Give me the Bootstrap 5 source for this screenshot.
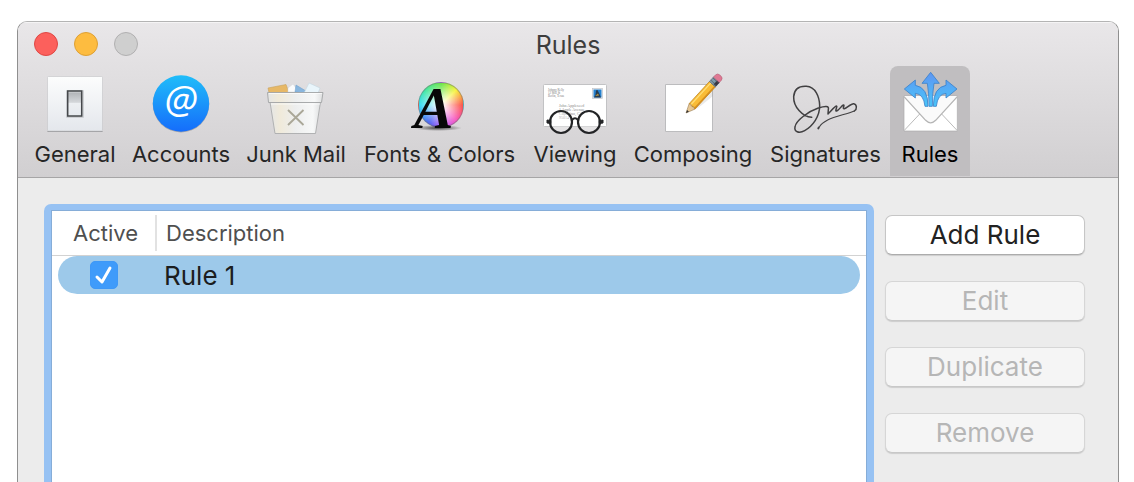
<!DOCTYPE html>
<html lang="en">
<head>
<meta charset="utf-8">
<meta name="viewport" content="width=device-width, initial-scale=1">
<title>Rules</title>
<link href="https://cdn.jsdelivr.net/npm/bootstrap@5.3.0/dist/css/bootstrap.min.css" rel="stylesheet">
<style>
body { font-family: Inter, "Liberation Sans", sans-serif; background: #fff; color: #262626; }
.page { min-height: 100vh; padding: 21px 15px 0 17px; }
.prefs { background: #ececec; border: 1px solid #8f8f8f; border-top-color: #b4b4b4; border-bottom: 0; border-radius: 10px 10px 0 0; overflow: hidden; }
.prefs-head { background: linear-gradient(#e9e7e9, #d1cfd1); border-bottom: 1px solid #a6a5a6; box-shadow: inset 0 1px #f5f4f5; padding-bottom: 1px; }
.titlebar { height: 44px; padding: 10px 16px; }
.title { font-size: 25px; line-height: 26px; color: #3d3d3d; }
.light { width: 24px; height: 24px; padding: 0; border: 1px solid; border-radius: 50%; margin-right: 16px; }
.light-close { background: #fc605c; border-color: #df4744; }
.light-min { background: #fdbc40; border-color: #dea034; }
.light-zoom { background: #cfcfcf; border-color: #b1b0b1; }
.tools { grid-template-columns: 98px 114px 116px 171px 100px 136px 129px 80px; padding: 0 8px; }
.tool { height: 110px; border-radius: 8px 8px 0 0; color: #262626; text-decoration: none; font-size: 22px; line-height: 28px; white-space: nowrap; }
.tool.active { background: #c0bec0; color: #000; }
.tool svg { width: 72px; height: 72px; margin-bottom: 2px; overflow: visible; flex: none; }
.wheel { width: 46px; height: 46px; border-radius: 50%; border: 1px solid #7778; background: radial-gradient(#fff 5%, #fff0 75%), conic-gradient(#5be33c, #f6f32c 45deg, #fc4638 90deg, #f64aba 135deg, #c04cf5 170deg, #3d58f2 215deg, #25d9f4 270deg, #32e6a0 310deg, #5be33c); }
.prefs-body { padding: 26px 33px 0 26px; gap: 11px; }
.rules-box { border: solid #97c2f3; border-width: 6px 7px 0; border-radius: 7px 7px 0 0; background: #fff; border-bottom: 0; }
.rules-inner { border: 1px solid #86add8; border-bottom: 0; height: 100%; }
.rules-table { border-collapse: separate; border-spacing: 0; }
.rules-table th { font-weight: 400; font-size: 22px; line-height: 28px; height: 45px; color: #4f4f4f; border-bottom: 1px solid #d2d2d2; padding: 0 0 0 9px; }
.rules-table .col-active { width: 105px; padding: 4px 0; height: 45px; }
.col-active span { display: block; padding-left: 21px; line-height: 36px; border-right: 2px solid #e2e2e2; }
.rules-table td { height: 38px; background: #9dc9ea; background-clip: padding-box; font-size: 26px; line-height: 36px; color: #1b1d20; padding: 2px 0 0 7px; }
.rules-table td:first-child { border-left: 6px solid transparent; border-radius: 25px 0 0 25px / 19px 0 0 19px; padding: 0 0 0 32px; }
.rules-table td:last-child { border-right: 6px solid transparent; border-radius: 0 25px 25px 0 / 0 19px 19px 0; }
.rules-table .form-check-input { width: 28px; height: 28px; margin: 0; border-radius: 5px; }
.rules-table .form-check-input:checked { border-color: #3e98f7; background: #3f9bfa url("data:image/svg+xml,%3Csvg xmlns='http://www.w3.org/2000/svg' viewBox='0 0 28 28'%3E%3Cpath d='M7 16l5 5L20 7' fill='none' stroke='white' stroke-width='3' stroke-linecap='round' stroke-linejoin='round'/%3E%3C/svg%3E") center/28px no-repeat; }
.actions { width: 200px; gap: 26px; padding-top: 11px; }
.actions .btn { height: 40px; padding: 0; font-size: 26px; line-height: 36px; background: #fff; border: 1px solid #c6c6c6; border-bottom-color: #acacac; border-radius: 7px; color: #222; box-shadow: 0 1px 1px #0002; }
.actions .btn:disabled { background: #f5f5f5; border-color: #d6d6d6; border-bottom-color: #c8c8c8; color: #b6b6b6; opacity: 1; }
</style>
</head>
<body>
<div class="page d-flex flex-column">
<main class="prefs flex-grow-1 d-flex flex-column">
<header class="prefs-head">
<div class="titlebar row g-0">
<div class="col d-flex"><button class="light light-close" aria-label="Close"></button><button class="light light-min" aria-label="Minimize"></button><button class="light light-zoom" aria-label="Zoom" disabled></button></div>
<h1 class="title col-auto mb-0 fw-normal">Rules</h1>
<div class="col"></div>
</div>
<nav class="tools d-grid" aria-label="Preferences">
<a href="#" class="tool d-flex flex-column align-items-center">
<svg viewBox="0 0 72 72"><defs><linearGradient id="plate" x2="0" y2="1"><stop stop-color="#fcfdfd"/><stop offset="1" stop-color="#e4e7ec"/></linearGradient><linearGradient id="sw" x2="0" y2="1"><stop stop-color="#dadcde"/><stop offset=".1" stop-color="#b5b8bb"/><stop offset=".45" stop-color="#d4d7da"/><stop offset=".5" stop-color="#eceff2"/><stop offset="1" stop-color="#e5e9ed"/></linearGradient></defs><path d="M8.500 65.500h55" stroke="#929395"/><rect x="8.500" y="10.500" width="55" height="54.500" rx="1" fill="url(#plate)" stroke="#c8c9cc" stroke-width=".7"/><rect x="27" y="24" width="18" height="28" rx="1" fill="#b9bcc0" opacity=".6"/><rect x="28.700" y="25" width="14" height="25" fill="url(#sw)" stroke="#45484b" stroke-width="1.500"/></svg>
<span>General</span></a>
<a href="#" class="tool d-flex flex-column align-items-center">
<svg viewBox="0 0 72 72"><defs><linearGradient id="acc" x2="0" y2="1"><stop stop-color="#20bdf9"/><stop offset="1" stop-color="#156dfb"/></linearGradient></defs><circle cx="36" cy="38.300" r="28.200" fill="#777" opacity=".5"/><circle cx="36" cy="37.500" r="28.200" fill="url(#acc)"/><text x="36" y="48" text-anchor="middle" font-family="Open Sans" font-style="italic" font-weight="400" font-size="39" fill="#fff">@</text></svg>
<span>Accounts</span></a>
<a href="#" class="tool d-flex flex-column align-items-center">
<svg viewBox="0 0 72 72"><defs><linearGradient id="bin"><stop stop-color="#e5e6e6"/><stop offset=".2" stop-color="#f0eada"/><stop offset=".5" stop-color="#edeeee"/><stop offset=".85" stop-color="#f7f8f8"/><stop offset="1" stop-color="#dedfe0"/></linearGradient></defs><path d="M8 22l18-3.500 3 8H9z" fill="#e7b866" stroke="#c8a25e" stroke-width=".6"/><path d="M28 22l5-4 6 8H28z" fill="#fafbfc" stroke="#d2d5d8" stroke-width=".5"/><path d="M36 19l10 6-2 2-9-1z" fill="#89b6de" stroke="#6a9fcd" stroke-width=".5"/><path d="M49 17l11 5-2 5H44z" fill="#e9f5fb" stroke="#bdd3df" stroke-width=".5"/><path d="M10 36l5 31.500h40.500L60.500 36z" fill="url(#bin)" stroke="#aaabad" stroke-width=".9"/><path d="M7.500 26.500h55.500l-1.500 10h-53z" fill="url(#bin)" stroke="#a2a4a5" stroke-width=".9"/><path d="M9 27.500h53M11 38h49" stroke="#fff" opacity=".7"/><path d="M28 44l15.500 15M43.500 44L28 59" stroke="#aaa798" stroke-width="1.900"/></svg>
<span>Junk Mail</span></a>
<a href="#" class="tool d-flex flex-column align-items-center">
<svg viewBox="0 0 72 72"><defs><radialGradient id="shade"><stop stop-color="#111" stop-opacity=".75"/><stop offset="1" stop-color="#222" stop-opacity="0"/></radialGradient></defs><foreignObject x="14" y="16" width="46" height="46"><div class="wheel"></div></foreignObject><ellipse cx="34" cy="62" rx="24" ry="3" fill="url(#shade)"/><text x="10" y="62" font-family="Liberation Serif" font-weight="700" font-style="italic" font-size="59" fill="#080808">A</text></svg>
<span>Fonts &amp; Colors</span></a>
<a href="#" class="tool d-flex flex-column align-items-center">
<svg viewBox="0 0 72 72"><rect x="4.500" y="18.500" width="63" height="42" rx="1" fill="#fff" stroke="#c2c2c4"/><g fill="#777" font-family="Liberation Serif" font-size="3"><text x="9" y="25">Johnny Kelly</text><text x="9" y="28">12 Mill St</text><text x="9" y="31">Berlin, Texas</text></g><g fill="#888" font-family="Liberation Serif" font-size="4"><text x="20" y="41">John Appleseed</text><text x="20" y="45">1 Apple Avenue</text><text x="20" y="49">Cupertino, CA</text><text x="20" y="53">95014</text></g><rect x="53.500" y="22.500" width="10" height="10" fill="#eee" stroke="#b9bdc5" stroke-width=".6"/><path d="M54.500 23.500h8v8h-8z" fill="#2582d0"/><path d="M57 24.500l1.500-.5 2 4 1.500 3.500h-7l1.500-3z" fill="#263b51"/><path d="M56 30l3-2.500 1 2" fill="#b39442"/><g fill="#fff5" stroke="#232426" stroke-width="2.200"><circle cx="22" cy="56" r="11"/><circle cx="50" cy="56" r="11"/><path d="M33 54q3-3.500 6 0" fill="none"/></g><path d="M8 54l4 .5v3L8 57zM64 54l-4 .5v3l4-.5z" fill="#232426" stroke="#232426"/></svg>
<span>Viewing</span></a>
<a href="#" class="tool d-flex flex-column align-items-center">
<svg viewBox="0 0 72 72"><path d="M8.500 18.500h47v47h-47z" fill="#fff" stroke="#bcbcbe"/><path d="M29 47l12-5 15-12v-8l-18 14z" fill="#999" opacity=".22"/><g transform="translate(29 47) rotate(-47.500)"><path d="M0 0l9-4v8z" fill="#e6c795" stroke="#957549" stroke-width=".5"/><path d="M0 0l3-1.300v2.600z" fill="#333"/><path d="M9-4h30v8H9l1-2-1-2 1-2z" fill="#f9bc37" stroke="#b78222" stroke-width=".7"/><path d="M9 2.500h30V4H9z" fill="#d58e20"/><path d="M10-2h29" stroke="#ffdf79" stroke-width="1.200"/><path d="M39-4h6v8h-6z" fill="#7e99a8" stroke="#56636e" stroke-width=".5"/><path d="M40 1h5v3h-5zM41-4v8M44-4v8" fill="#3b3440" stroke="#465761" stroke-width=".6"/><path d="M45-4h3q3 0 3 4t-3 4h-3z" fill="#df7994" stroke="#ad5c73" stroke-width=".5"/></g></svg>
<span>Composing</span></a>
<a href="#" class="tool d-flex flex-column align-items-center">
<svg viewBox="0 0 216 216"><g transform="translate(-93 -18)" fill="none" stroke="#414042" stroke-linecap="round" stroke-linejoin="round"><path stroke-width="4.500" d="M158 172C130 170 103 140 104 110C106 85 124 78 142 79C170 81 181 110 182 136C183 170 160 199 137 212C119 222 105 214 108 201C111 180 151 153 178 144C198 138 211 137 208 148L207 162C216 153 227 139 232 138C237 138 226 155 233 153C240 151 248 136 253 135C259 134 248 148 256 146C264 144 276 130 284 131C294 133 295 147 286 153"/><path stroke-width="3.200" d="M286 153C263 163 230 168 206 180Q187 190 181 201"/><path stroke-width="6" d="M178 205l1-2"/></g></svg>
<span>Signatures</span></a>
<a href="#" class="tool active d-flex flex-column align-items-center" aria-current="page">
<svg viewBox="0 0 216 216"><defs><linearGradient id="arr" gradientUnits="userSpaceOnUse" x1="0" y1="37" x2="0" y2="139"><stop stop-color="#5f95f2"/><stop offset="1" stop-color="#49c6fa"/></linearGradient></defs><g transform="translate(-402 -18)"><path d="M432 108h160v105H432z" fill="#fff" stroke="#aaa" stroke-width="2"/><path d="M432 212l47-50M592 212l-47-50" stroke="#bbb" stroke-width="3"/><path d="M432 108l65 71q15 15 30 0l65-71z" fill="#fafafa"/><path d="M432 110l65 71q15 15 30 0l65-71" fill="none" stroke="#b5b5b5" stroke-width="4"/><g fill="url(#arr)" stroke="#3c82ca" stroke-width="2.500" stroke-linejoin="round"><path d="M512 37l26 33h-16q-5 28-5 69h-10q0-41-5-69h-16z"/><path d="M433 87l33-27v16q38 6 38 63h-9q-4-37-29-39v14z"/><path d="M591 87l-33-27v16q-38 6-38 63h9q4-37 29-39v14z"/></g></g></svg>
<span>Rules</span></a>
</nav>
</header>
<div class="prefs-body d-flex flex-grow-1">
<div class="rules-box flex-grow-1"><div class="rules-inner">
<table class="rules-table w-100">
<thead><tr><th class="col-active" scope="col"><span>Active</span></th><th scope="col">Description</th></tr></thead>
<tbody><tr><td><input class="form-check-input d-block" type="checkbox" id="rule1" checked></td><td><label for="rule1">Rule 1</label></td></tr></tbody>
</table>
</div></div>
<div class="actions d-flex flex-column">
<button type="button" class="btn">Add Rule</button>
<button type="button" class="btn" disabled>Edit</button>
<button type="button" class="btn" disabled>Duplicate</button>
<button type="button" class="btn" disabled>Remove</button>
</div>
</div>
</main>
</div>
<script src="https://cdn.jsdelivr.net/npm/bootstrap@5.3.0/dist/js/bootstrap.bundle.min.js"></script>
</body>
</html>
